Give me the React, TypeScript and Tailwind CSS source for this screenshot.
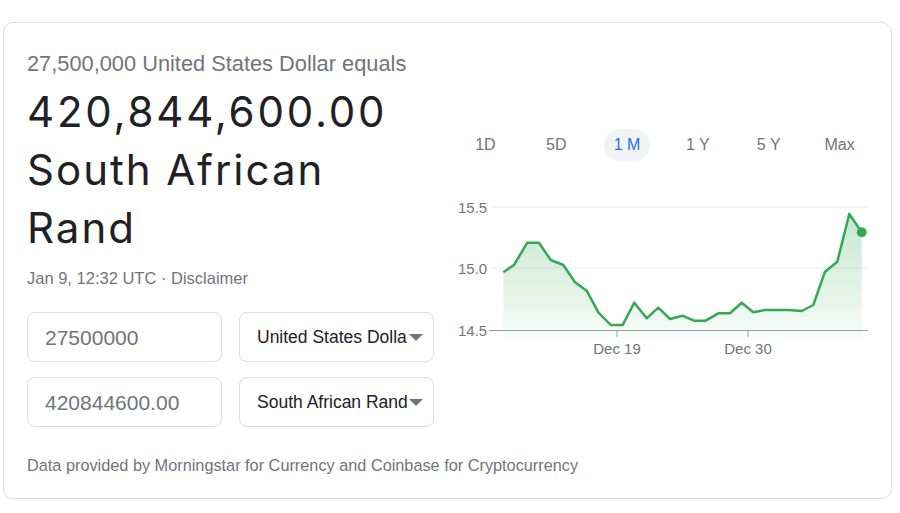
const arial = { fontFamily: '"Liberation Sans", Arial, sans-serif' }
const display = { fontFamily: 'Inter, "Open Sans", sans-serif' }

const points: [number, number][] = [
  [503.3, 272.3], [514, 265], [527.3, 242.7], [539, 242.7], [550.7, 260], [563.3, 265],
  [575, 282.3], [586.7, 290.7], [598.3, 312.3], [610.7, 325], [622.7, 325], [634.3, 302.7],
  [646.7, 318.3], [658.3, 307.7], [670, 319], [682.3, 315.7], [694, 320.7], [705.7, 320.7],
  [718.3, 313.3], [730, 313.3], [741.7, 302.7], [753.3, 312.3], [765, 310], [776.7, 310],
  [789, 310], [801.7, 311], [813.3, 305], [825, 271.7], [837.3, 261.7], [849.3, 214],
  [861.7, 232.3],
]

const tabs = ['1D', '5D', '1 M', '1 Y', '5 Y', 'Max']

function Chart() {
  const line = points.map(([x, y], i) => `${i ? 'L' : 'M'}${x} ${y}`).join(' ')
  const last = points[points.length - 1]
  const area = `${line} L${last[0]} 337 L${points[0][0]} 337 Z`
  return (
    <svg width="425" height="175" viewBox="450 190 425 175" className="block" style={arial}>
      <defs>
        <linearGradient id="fill" x1="0" y1="0" x2="0" y2="1">
          <stop offset="0%" stopColor="#34a853" stopOpacity="0.28" />
          <stop offset="100%" stopColor="#34a853" stopOpacity="0.04" />
        </linearGradient>
      </defs>
      <line x1="490" y1="207" x2="868" y2="207" stroke="#ececec" strokeWidth="1" />
      <line x1="490" y1="268" x2="868" y2="268" stroke="#ececec" strokeWidth="1" />
      <text x="458" y="207" dominantBaseline="central" fontSize="15" fill="#70757a">15.5</text>
      <text x="458" y="268" dominantBaseline="central" fontSize="15" fill="#70757a">15.0</text>
      <text x="458" y="330" dominantBaseline="central" fontSize="15" fill="#70757a">14.5</text>
      <path d={area} fill="url(#fill)" />
      <line x1="489" y1="330.5" x2="868" y2="330.5" stroke="#9aa0a6" strokeWidth="1" />
      <line x1="617" y1="330" x2="617" y2="337" stroke="#9aa0a6" strokeWidth="1" />
      <line x1="748" y1="330" x2="748" y2="337" stroke="#9aa0a6" strokeWidth="1" />
      <text x="617" y="348" dominantBaseline="central" textAnchor="middle" fontSize="15" fill="#70757a">Dec 19</text>
      <text x="748" y="348" dominantBaseline="central" textAnchor="middle" fontSize="15" fill="#70757a">Dec 30</text>
      <path d={line} fill="none" stroke="#34a853" strokeWidth="2.5" strokeLinejoin="round" />
      <circle cx={last[0]} cy={last[1]} r="5" fill="#34a853" />
    </svg>
  )
}

function Caret() {
  return (
    <svg width="14" height="7" viewBox="0 0 14 7" className="shrink-0">
      <path d="M0 0 L14 0 L7 7 Z" fill="#70757a" />
    </svg>
  )
}

export default function App() {
  return (
    <div className="w-[900px] h-[513px] bg-white pt-[22px] pl-[3px]" style={arial}>
      <div className="w-[889px] h-[477px] border border-[#dadce0] rounded-[10px] pl-[23px] pr-[16px]">
        <div className="flex">
          {/* Left: conversion result and inputs */}
          <div className="w-[408px] pt-[27px]">
            <div className="text-[21.8px] leading-[28px] text-[#70757a] whitespace-nowrap">
              27,500,000 United States Dollar equals
            </div>
            <div className="mt-[5px] text-[42px] leading-[58px] tracking-[2px] text-[#202124]" style={display}>
              <div className="tracking-[2.8px]">420,844,600.00</div>
              <div>South African</div>
              <div>Rand</div>
            </div>
            <div className="mt-[11px] text-[16.5px] leading-[20px] text-[#70757a] whitespace-nowrap">
              Jan 9, 12:32 UTC · Disclaimer
            </div>

            <div className="mt-[24px] grid grid-cols-[195px_195px] gap-x-[17px] gap-y-[15px]">
              <div className="h-[50px] border border-[#dadce0] rounded-[8px] flex items-center pl-[17px] pt-[1px] text-[21px] text-[#70757a]">
                27500000
              </div>
              <div className="h-[50px] border border-[#dadce0] rounded-[8px] flex items-center pl-[17px] text-[17.5px] text-[#202124]">
                <span className="w-[152px] whitespace-nowrap">United States Dolla</span>
                <Caret />
              </div>
              <div className="h-[50px] border border-[#dadce0] rounded-[8px] flex items-center pl-[17px] pt-[1px] text-[21px] text-[#70757a]">
                420844600.00
              </div>
              <div className="h-[50px] border border-[#dadce0] rounded-[8px] flex items-center pl-[17px] text-[17.5px] text-[#202124]">
                <span className="w-[152px] whitespace-nowrap">South African Rand</span>
                <Caret />
              </div>
            </div>
          </div>

          {/* Right: range tabs and chart */}
          <div className="ml-[15px] w-[425px]">
            <div className="mt-[106px] h-[32px] flex">
              {tabs.map((t) => (
                <div key={t} className="flex-1 flex items-center justify-center">
                  {t === '1 M' ? (
                    <span className="h-[32px] px-[10px] rounded-full bg-[#f1f3f6] text-[#1a73e8] text-[16px] leading-[32px]">
                      {t}
                    </span>
                  ) : (
                    <span className="text-[16px] text-[#70757a]">{t}</span>
                  )}
                </div>
              ))}
            </div>
            <div className="mt-[29px]">
              <Chart />
            </div>
          </div>
        </div>

        <div className="mt-[28px] text-[16.3px] leading-[20px] text-[#70757a] whitespace-nowrap">
          Data provided by Morningstar for Currency and Coinbase for Cryptocurrency
        </div>
      </div>
    </div>
  )
}
